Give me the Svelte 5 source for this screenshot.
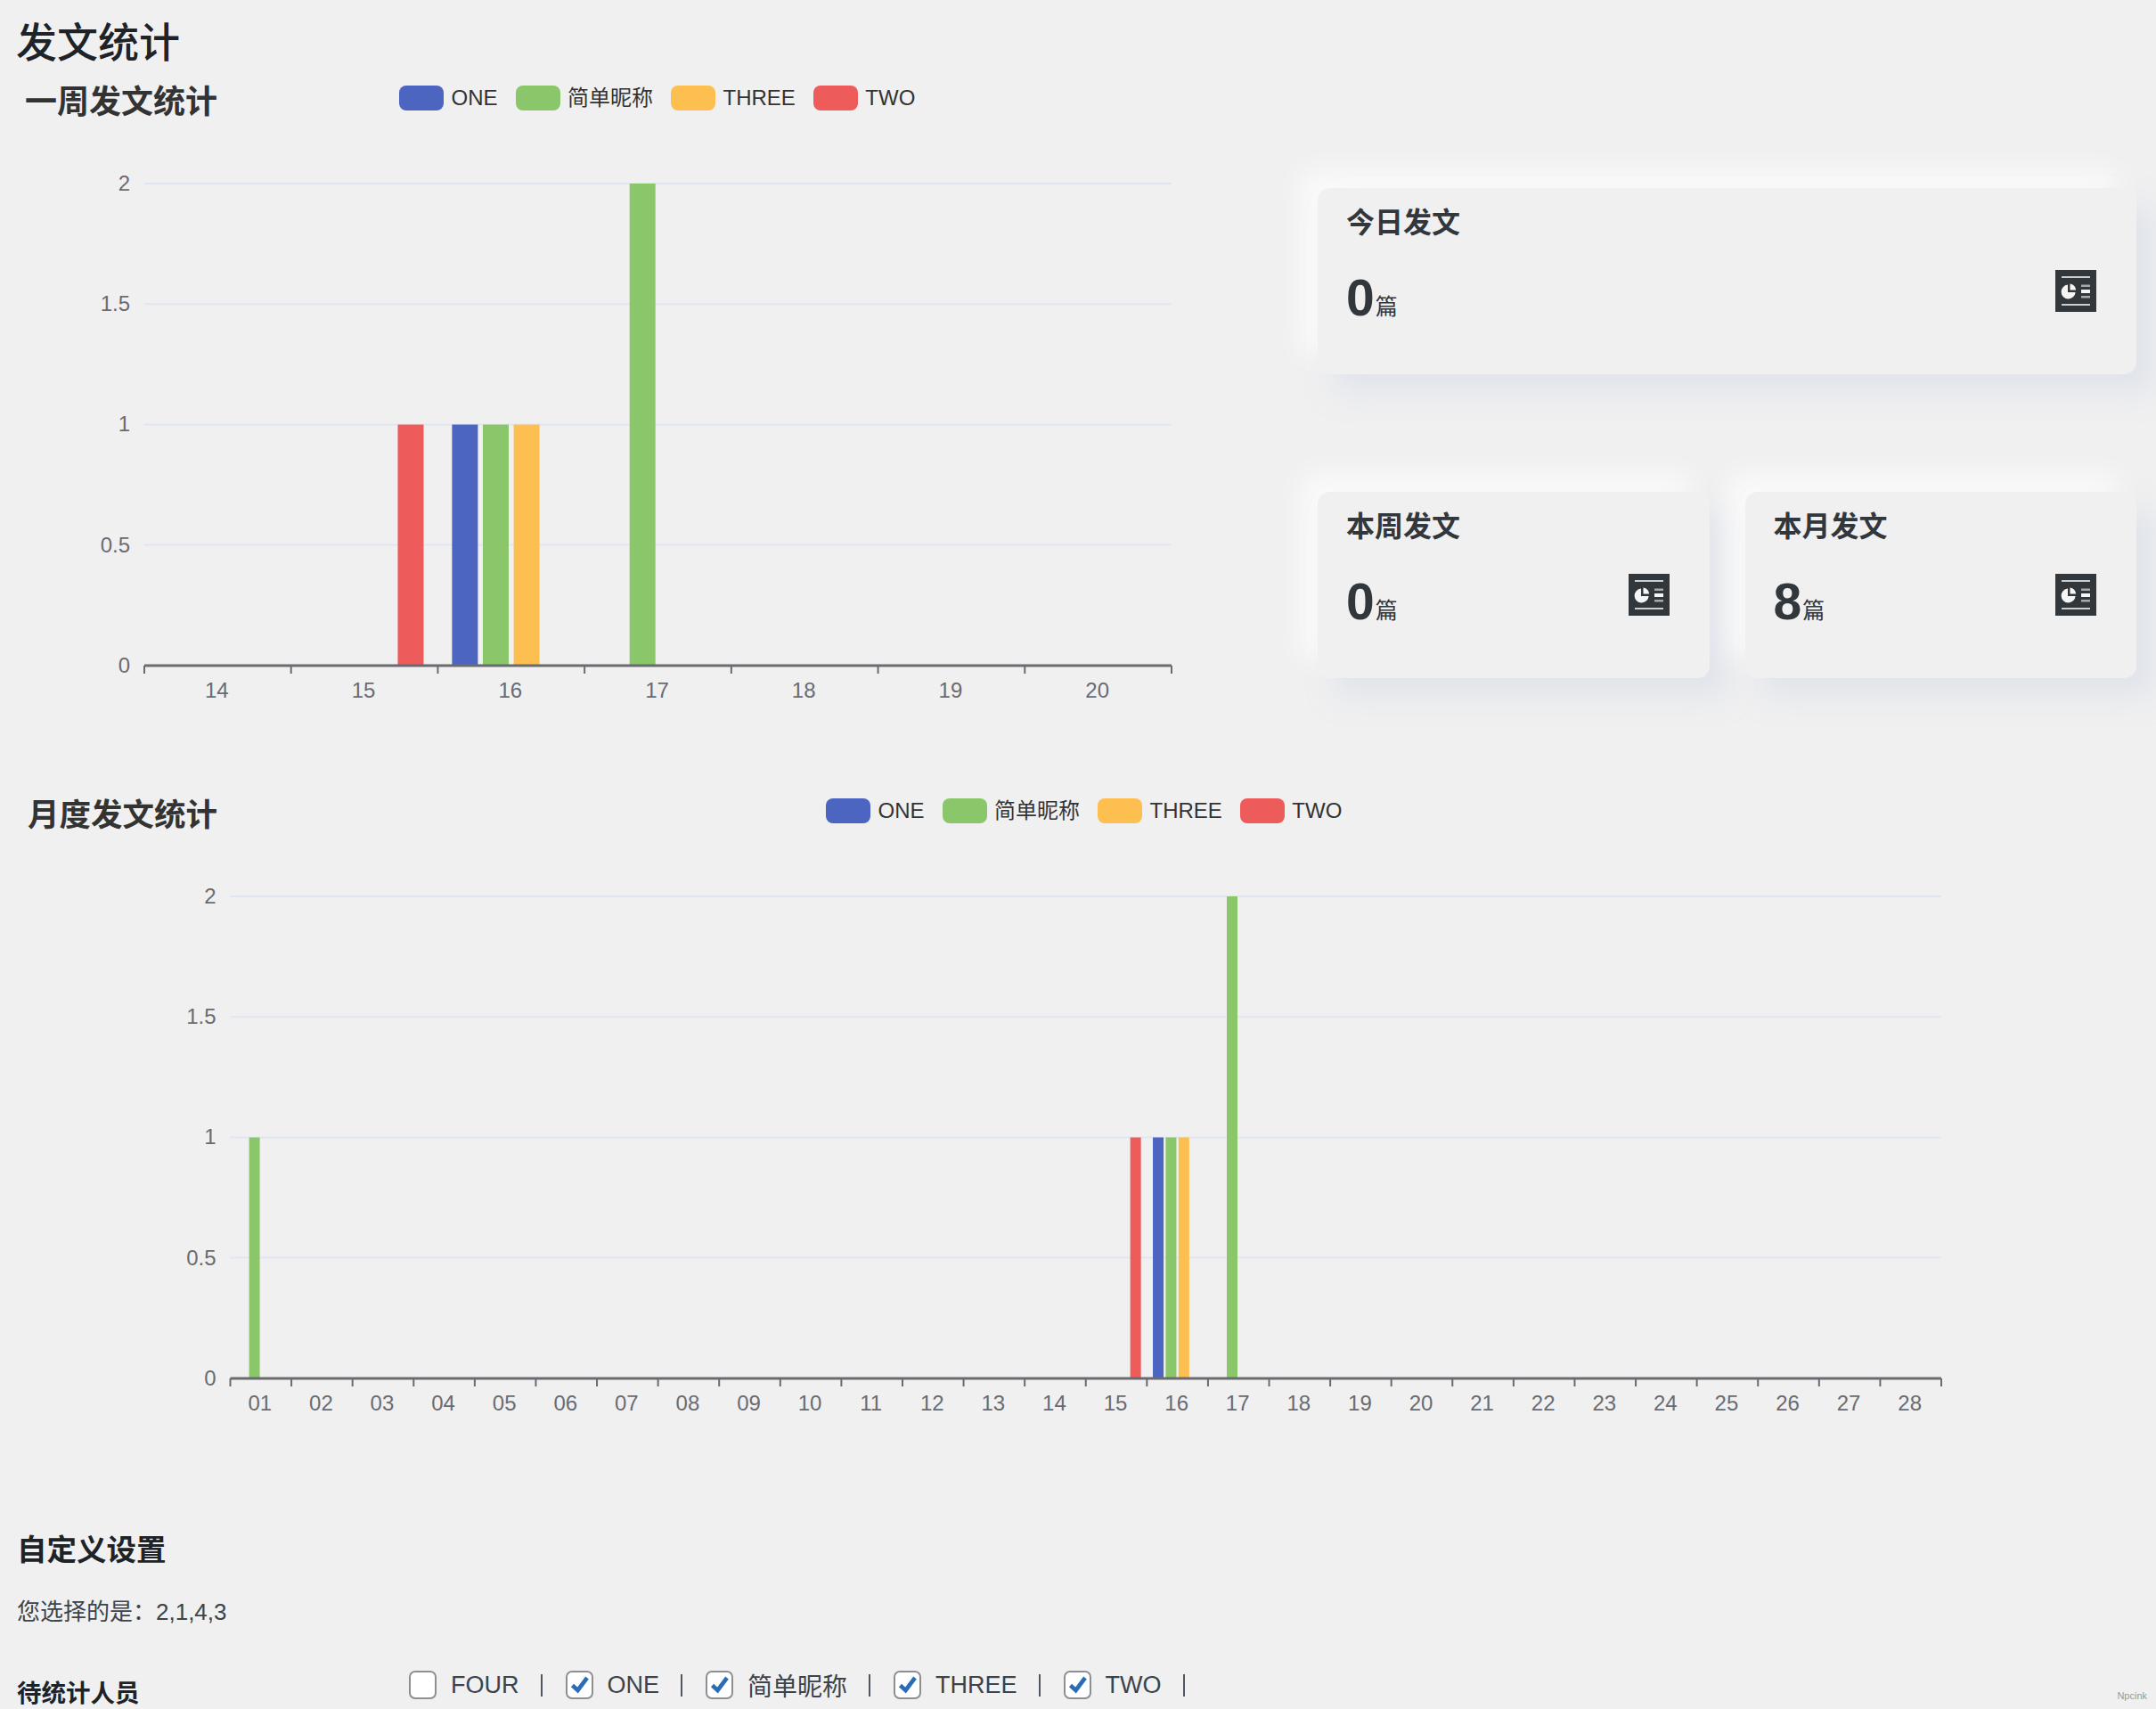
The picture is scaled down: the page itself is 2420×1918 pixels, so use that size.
<script lang="ts">
  const colors = ['#4b65c1', '#89c76a', '#fdbf4f', '#ee5b5b'];
  const names = ['ONE', '简单昵称', 'THREE', 'TWO'];

  const yTicks = [
    { label: '2', y: 66 },
    { label: '1.5', y: 201.2 },
    { label: '1', y: 336.4 },
    { label: '0.5', y: 471.5 },
    { label: '0', y: 607 },
  ];

  // values per series: label -> [ONE, 简单昵称, THREE, TWO]
  const weekData: Record<string, number[]> = {
    '15': [0, 0, 0, 1],
    '16': [1, 1, 1, 0],
    '17': [0, 2, 0, 0],
  };
  const monthData: Record<string, number[]> = {
    '01': [0, 1, 0, 0],
    ...weekData,
  };

  const weekDays = ['14', '15', '16', '17', '18', '19', '20'];
  const monthDays = Array.from({ length: 28 }, (_, i) => String(i + 1).padStart(2, '0'));

  const members = [
    { id: 5, name: 'FOUR' },
    { id: 1, name: 'ONE' },
    { id: 2, name: '简单昵称', cjk: true },
    { id: 4, name: 'THREE' },
    { id: 3, name: 'TWO' },
  ];

  let selected = $state([2, 1, 4, 3]);

  function toggle(id: number) {
    selected = selected.includes(id) ? selected.filter((s) => s !== id) : [...selected, id];
  }

  function bars(days: string[], data: Record<string, number[]>, x0: number, x1: number, w: number, gap: number) {
    const band = (x1 - x0) / days.length;
    const out = [];
    days.forEach((day, i) => {
      const values = data[day];
      if (!values) return;
      const start = x0 + band * (i + 0.5) - (4 * w + 3 * gap) / 2;
      values.forEach((v, s) => {
        if (v > 0) {
          const h = (v / 2) * (607 - 66);
          out.push({ x: start + s * (w + gap), y: 607 - h, h, fill: colors[s] });
        }
      });
    });
    return out;
  }

  const cards = [
    { title: '今日发文', count: 0, wide: true },
    { title: '本周发文', count: 0, wide: false },
    { title: '本月发文', count: 8, wide: false },
  ];
</script>

{#snippet legend()}
  <ul class="legend">
    {#each names as name, i}
      <li>
        <span class="swatch" style="background: {colors[i]}"></span>
        <span>{name}</span>
      </li>
    {/each}
  </ul>
{/snippet}

{#snippet chart(days: string[], data: Record<string, number[]>, x0: number, x1: number, w: number, gap: number, width: number)}
  {@const band = (x1 - x0) / days.length}
  <svg class="chart" {width} height="660" viewBox="0 0 {width} 660">
    {#each yTicks as t}
      {#if t.label !== '0'}
        <line class="grid" x1={x0} x2={x1} y1={t.y} y2={t.y} />
      {/if}
      <text class="tick-label" x={x0 - 16} y={t.y + 8} text-anchor="end">{t.label}</text>
    {/each}
    {#each bars(days, data, x0, x1, w, gap) as b}
      <rect x={b.x} y={b.y} width={w} height={b.h} fill={b.fill} />
    {/each}
    <line class="axis" x1={x0} x2={x1} y1="607" y2="607" />
    {#each days as day, i}
      <line class="axis thin" x1={x0 + band * i} x2={x0 + band * i} y1="607" y2="616" />
      <text class="tick-label" x={x0 + band * (i + 0.5) - 1} y="643" text-anchor="middle">{day}</text>
    {/each}
    <line class="axis thin" {x1} x2={x1} y1="607" y2="616" />
  </svg>
{/snippet}

<div class="page">
  <h1>发文统计</h1>

  <section class="top">
    <div class="chart-col">
      <div class="chart-head week">
        <h2>一周发文统计</h2>
        {@render legend()}
      </div>
      {@render chart(weekDays, weekData, 162, 1315, 29, 5.6, 1479)}
    </div>

    <div class="cards">
      {#each cards as card}
        <div class="card" class:wide={card.wide}>
          <div class="card-title">{card.title}</div>
          <div class="card-body">
            <div class="count"><b>{card.count}</b><span>篇</span></div>
            <svg class="card-icon" width="46" height="47" viewBox="0 0 46 47" aria-hidden="true">
              <rect width="46" height="47" fill="#32373c" />
              <path d="M7 8h32M7 39h32" stroke="#fff" stroke-width="1.6" fill="none" />
              <path d="M14 16.5a8 8 0 1 0 8.6 8.5H14z" fill="#f5f5f5" />
              <path d="M16.5 15.5a8 8 0 0 1 6.6 7h-6.6z" fill="#f5f5f5" />
              <path d="M29 16.5h10v2.4H29zM29 29h10v2.4H29z" fill="#a7aaad" />
              <path d="M29 22h10v4H29z" fill="#f5f5f5" />
            </svg>
          </div>
        </div>
      {/each}
    </div>
  </section>

  <section class="monthly">
    <div class="chart-head month">
      <h2>月度发文统计</h2>
      {@render legend()}
    </div>
    {@render chart(monthDays, monthData, 258.5, 2179, 12, 2.4, 2420)}
  </section>

  <section class="settings">
    <h3>自定义设置</h3>
    <p>您选择的是：{selected.join(',')}</p>
    <div class="member-row">
      <div class="member-title">待统计人员</div>
      <div class="members">
        {#each members as m}
          <label class="member">
            <span class="box">
              <input type="checkbox" checked={selected.includes(m.id)} onchange={() => toggle(m.id)} />
              {#if selected.includes(m.id)}
                <svg width="23" height="22" viewBox="0 0 23 22" aria-hidden="true">
                  <path d="M3.5 11.5l6 5.5L20 3" fill="none" stroke="#2a6db5" stroke-width="4.6" />
                </svg>
              {/if}
            </span>
            <span class:cjk={m.cjk}>{m.name}</span>
          </label>
          <span class="sep"></span>
        {/each}
      </div>
    </div>
  </section>

  <span class="watermark">Npcink</span>
</div>

<style>
  :global(body) {
    background: #f0f0f1;
  }

  .page {
    position: relative;
    height: 1918px;
    overflow: hidden;
    background: #f0f0f1;
    color: #3c434a;
    font-family: 'Liberation Sans', 'Noto Sans CJK SC', sans-serif;
  }

  h1 {
    margin: 0;
    padding: 20px 0 4px 18px;
    font-size: 46px;
    line-height: 56px;
    font-weight: 500;
    color: #1d2327;
  }

  .top {
    display: flex;
  }

  .chart-col {
    width: 1479px;
    flex-shrink: 0;
  }

  .monthly {
    margin-top: 80px;
  }

  .chart-head {
    display: flex;
    height: 60px;
  }

  .chart-head h2 {
    margin: 0;
    padding-top: 13px;
    font-size: 36px;
    line-height: 44px;
    font-weight: 700;
    color: #333;
  }

  .week {
    padding-left: 28px;
  }

  .week h2 {
    width: 420px;
  }

  .month {
    padding-left: 31px;
  }

  .month h2 {
    width: 896px;
    font-size: 35.5px;
  }

  .legend {
    display: flex;
    gap: 20px;
    margin: 16px 0 0;
    padding: 0;
    list-style: none;
    font-size: 24px;
    line-height: 28px;
    color: #333;
    height: 28px;
  }

  .legend li {
    display: flex;
    gap: 8.5px;
  }

  .swatch {
    width: 50px;
    height: 28px;
    border-radius: 8px;
  }

  .chart {
    display: block;
  }

  .grid {
    stroke: #e0e6f1;
    stroke-width: 2;
  }

  .axis {
    stroke: #6a6b70;
    stroke-width: 3;
  }

  .axis.thin {
    stroke-width: 2;
  }

  .tick-label {
    font-size: 24px;
    fill: #6a6b70;
  }

  .cards {
    width: 919px;
    padding-top: 131px;
    display: grid;
    grid-template-columns: 1fr 1fr;
    column-gap: 40px;
    row-gap: 132px;
    align-content: start;
  }

  .card {
    height: 209px;
    padding: 20px 45px 0 32px;
    box-sizing: border-box;
    border-radius: 14px;
    background: #f0f0f1;
    box-shadow:
      20px 20px 30px rgba(209, 217, 230, 0.5),
      -20px -20px 30px rgba(255, 255, 255, 0.7);
  }

  .card.wide {
    grid-column: 1 / 3;
  }

  .card-title {
    font-size: 32px;
    line-height: 38px;
    font-weight: 700;
    color: #32373c;
  }

  .card-body {
    display: flex;
    justify-content: space-between;
    margin-top: 34px;
  }

  .count {
    display: flex;
    align-items: flex-end;
    height: 47px;
    color: #32373c;
    padding-top: 11px;
  }

  .count b {
    font-size: 57px;
    line-height: 54px;
  }

  .count span {
    font-size: 25px;
    line-height: 34px;
    margin-left: 1px;
  }

  .settings {
    padding: 120px 0 0 19px;
  }

  h3 {
    margin: 0;
    font-size: 33.5px;
    line-height: 40px;
    font-weight: 700;
    color: #1d2327;
  }

  p {
    margin: 32px 0 0;
    font-size: 26px;
    line-height: 34px;
  }

  .member-row {
    display: flex;
    margin-top: 45px;
  }

  .member-title {
    width: 440px;
    padding-top: 11px;
    font-size: 27.5px;
    line-height: 38px;
    font-weight: 700;
    color: #1d2327;
  }

  .members {
    display: flex;
    align-items: center;
    height: 40px;
    font-size: 27px;
  }

  .member {
    display: flex;
    align-items: center;
    gap: 16px;
  }

  .cjk {
    font-size: 28px;
  }

  .box {
    position: relative;
    width: 31px;
    height: 32px;
  }

  .box input {
    appearance: none;
    display: block;
    width: 31px;
    height: 32px;
    margin: 0;
    box-sizing: border-box;
    border: 2px solid #8c8f94;
    border-radius: 7px;
    background: #fff;
  }

  .box svg {
    position: absolute;
    left: 4px;
    top: 5px;
    pointer-events: none;
  }

  .sep {
    width: 2px;
    height: 25px;
    margin: 0 26px 0 24px;
    background: #50575e;
  }

  .watermark {
    position: absolute;
    right: 10px;
    bottom: 9px;
    font-size: 11px;
    color: #999;
  }
</style>
